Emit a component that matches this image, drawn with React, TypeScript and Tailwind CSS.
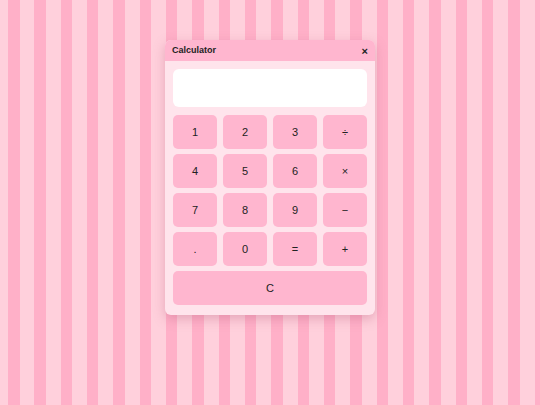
import React from 'react';

const keys = ['1', '2', '3', '÷', '4', '5', '6', '×', '7', '8', '9', '−', '.', '0', '=', '+'];

export default function App() {
  return (
    <div
      className="flex h-[405px] w-[540px] justify-center pt-[40px] bg-[repeating-linear-gradient(90deg,#ffd0dc_0px,#ffd0dc_8px,#ffb0c8_8px,#ffb0c8_19.5px,#ffd0dc_19.5px,#ffd0dc_26.33px)]"
      style={{ fontFamily: '"Liberation Sans", Arial, sans-serif' }}
    >
      <div className="flex h-[275px] w-[210px] flex-col overflow-hidden rounded-[6px] bg-[#ffe4ec] shadow-[0_4px_12px_rgba(180,90,120,0.35)]">
        <div className="flex h-[21px] items-center justify-between bg-[#ffb6cf] px-[7px] pt-[1px]">
          <span className="text-[9px] font-bold text-[#222]">Calculator</span>
          <span className="text-[11px] font-semibold leading-none text-[#222]">×</span>
        </div>
        <div className="flex flex-col px-[8px] pt-[8px]">
          <div className="h-[38px] rounded-[6px] bg-white" />
          <div className="mt-[8px] grid grid-cols-4 gap-x-[6px] gap-y-[5px]">
            {keys.map((k) => (
              <button
                key={k}
                className="flex h-[34px] items-center justify-center rounded-[5px] bg-[#ffb6cf] text-[11px] text-[#222]"
              >
                {k}
              </button>
            ))}
            <button className="col-span-4 flex h-[34px] items-center justify-center rounded-[5px] bg-[#ffb6cf] text-[11px] text-[#222]">
              C
            </button>
          </div>
        </div>
      </div>
    </div>
  );
}
